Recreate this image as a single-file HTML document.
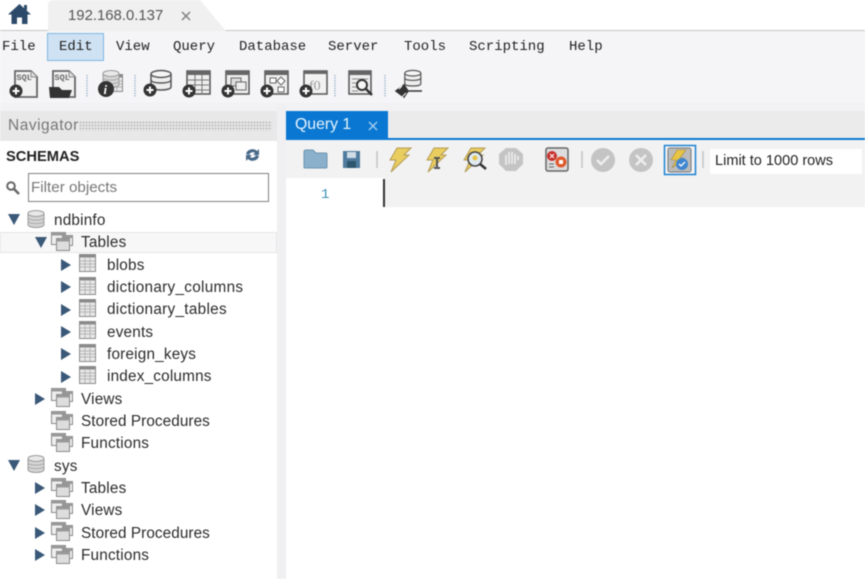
<!DOCTYPE html>
<html><head><meta charset="utf-8">
<style>
html,body{margin:0;padding:0;width:865px;height:579px;overflow:hidden;background:#fff}
#r{position:absolute;left:0;top:0;width:865px;height:579px;overflow:hidden;font-family:"Liberation Sans",sans-serif;color:#222;filter:blur(.5px)}
.a{position:absolute}
.m{position:absolute;top:39px;font:14px/16px "Liberation Mono",monospace;color:#222;white-space:pre}
.t{position:absolute;margin-top:1px;font:15.3px/18px "Liberation Sans",sans-serif;letter-spacing:.2px;color:#2b2b2b;white-space:pre}
svg{position:absolute;overflow:visible}
</style></head><body><div id="r">
<svg width="0" height="0">
<defs>
<g id="plus"><circle cx="0" cy="0" r="6.5" fill="#333"/><path d="M-3.5 0H3.5M0-3.5V3.5" stroke="#fff" stroke-width="2"/></g>
<g id="doc"><path d="M1 1H17L23 7V27H1Z" fill="#f2f2f2" stroke="#666" stroke-width="1.8"/><path d="M17 1V7H23" fill="#ddd" stroke="#888"/><text x="2.5" y="10" font-family="Liberation Mono" font-size="8.5" font-weight="bold" fill="#666">SQL</text></g>
<g id="db"><path d="M1 4V17C1 21 21 21 21 17V4" fill="#eee" stroke="#555" stroke-width="1.5"/><ellipse cx="11" cy="4" rx="10" ry="3.5" fill="#f5f5f5" stroke="#555" stroke-width="1.5"/><path d="M1 10C1 14 21 14 21 10" fill="none" stroke="#555" stroke-width="1.4"/></g>
<g id="sdb"><path d="M1 3.5V14.5C1 18.5 17 18.500 17 14.500V3.500" fill="#d5d5d5" stroke="#9a9a9a"/><ellipse cx="9" cy="3.500" rx="8" ry="3" fill="#e8e8e8" stroke="#9a9a9a"/><path d="M1 7.500C1 11 17 11 17 7.500M1 11C1 14.500 17 14.500 17 11" fill="none" stroke="#aaa"/></g>
<g id="tbl"><rect x=".5" y=".5" width="16" height="17" fill="#e8e8e8" stroke="#8c8c8c"/><rect x=".5" y=".5" width="16" height="3" fill="#8a8a8a"/><path d="M1 7H16M1 10H16M1 13H16M6 4V17M11 4V17" stroke="#b5b5b5"/></g>
<g id="grp"><rect x=".5" y=".5" width="14" height="12" fill="#eee" stroke="#8a8a8a"/><rect x=".5" y=".5" width="14" height="3" fill="#999"/><rect x="11.500" y="3.500" width="10" height="10" fill="#eee" stroke="#8a8a8a"/><rect x="11.500" y="3.500" width="10" height="2.500" fill="#999"/><rect x="5.500" y="6.500" width="13" height="12" fill="#ddd" stroke="#8a8a8a"/><rect x="5.500" y="6.500" width="13" height="3" fill="#999"/></g>
<path id="ar" d="M0 0L10 6L0 12Z" fill="#3a5878"/>
<path id="ad" d="M0 0H12L6 11Z" fill="#3a5878"/>
<g id="bolt"><path d="M9 0H23L16 7H21L3 24L8 12H2Z" fill="#e9cd5f" stroke="#b49c55"/></g>
</defs></svg>

<!-- top bars -->
<div class="a" style="left:0;top:30px;width:865px;height:1px;background:#c6c6c6"></div>
<div class="a" style="left:0;top:31px;width:865px;height:72px;background:#f5f5f7"></div>
<svg style="left:0;top:0" width="865" height="32"><path d="M48 31V6Q48 0 54 0H200L226 31Z" fill="#f0f0f0"/></svg>
<svg style="left:7px;top:3px" width="25" height="22"><path d="M12.500 1L24 11.500H20.500V21H15V14.500H10V21H4.500V11.500H1Z" fill="#2d4a6a"/><rect x="17" y="2" width="3" height="5" fill="#2d4a6a"/></svg>
<div class="a" style="left:68px;top:7px;font-size:14.900px;line-height:18px;color:#555">192.168.0.137</div>
<svg style="left:181px;top:11px" width="10" height="10"><path d="M1 1L9 9M9 1L1 9" stroke="#808080" stroke-width="1.500"/></svg>

<!-- menu -->
<div class="a" style="left:47px;top:33px;width:57px;height:28px;background:#cfe2f3;border:1px solid #7fb6e2;box-sizing:border-box"></div>
<div class="m" style="left:2px">File</div>
<div class="m" style="left:59px">Edit</div>
<div class="m" style="left:116px">View</div>
<div class="m" style="left:173px">Query</div>
<div class="m" style="left:239px">Database</div>
<div class="m" style="left:328px">Server</div>
<div class="m" style="left:404px">Tools</div>
<div class="m" style="left:469px">Scripting</div>
<div class="m" style="left:569px">Help</div>

<!-- main toolbar -->
<svg style="left:0;top:0" width="430" height="104">
<use href="#doc" x="14" y="70"/><use href="#plus" x="16" y="91"/>
<use href="#doc" x="52" y="70"/><path d="M49 87H59L62 90H72L69 98H50Z" fill="#333"/>
<path d="M87 75V97M135 75V97M335 75V97M385 75V97" stroke="#a9bdd4" stroke-width="1.500" stroke-dasharray="1.500 1"/>
<use href="#tbl" x="106" y="74"/><use href="#sdb" x="102" y="70"/><circle cx="106" cy="89" r="8" fill="#333"/><text x="103.500" y="94" font-family="Liberation Serif" font-size="13" font-style="italic" font-weight="bold" fill="#fff">i</text>
<use href="#db" x="150" y="70"/><use href="#plus" x="150" y="90"/>
<rect x="187" y="71" width="23" height="23" fill="#eee" stroke="#555" stroke-width="1.500"/><rect x="187" y="71" width="23" height="4" fill="#666"/><path d="M188 80H209M188 85H209M188 90H209M195 75V94M202 75V94" stroke="#777"/><use href="#plus" x="189" y="91"/>
<rect x="226" y="71" width="23" height="23" fill="#eee" stroke="#555" stroke-width="1.500"/><rect x="226" y="71" width="23" height="4" fill="#666"/><rect x="231" y="78" width="10" height="8" fill="#ddd" stroke="#666"/><rect x="236" y="82" width="10" height="8" fill="#eee" stroke="#666"/><use href="#plus" x="228" y="91"/>
<rect x="265" y="71" width="23" height="23" fill="#eee" stroke="#555" stroke-width="1.500"/><rect x="265" y="71" width="23" height="4" fill="#666"/><rect x="270" y="78" width="6" height="5" fill="#fff" stroke="#666"/><path d="M281 77L285 81L281 85L277 81Z" fill="#fff" stroke="#666"/><rect x="278" y="87" width="6" height="5" fill="#fff" stroke="#666"/><use href="#plus" x="267" y="91"/>
<rect x="304" y="71" width="23" height="23" fill="#f2f2f2" stroke="#555" stroke-width="1.500"/><rect x="304" y="71" width="23" height="3" fill="#666"/><text x="309" y="90" font-family="Liberation Serif" font-size="14" fill="#999">f0</text><use href="#plus" x="306" y="91"/>
<rect x="349" y="71" width="22" height="23" fill="#eee" stroke="#555" stroke-width="1.500"/><rect x="349" y="71" width="22" height="4" fill="#666"/><path d="M352 79H368M352 83H358M352 87H358M352 91H358" stroke="#888"/><circle cx="362" cy="85" r="5" fill="#f5f5f5" stroke="#333" stroke-width="2"/><path d="M366 89L372 95" stroke="#333" stroke-width="2.500"/>
<g transform="translate(404,70) scale(.8)"><use href="#db"/></g>
<path d="M396 91L404 85L408 91L404 97ZM404 91H422" fill="#333" stroke="#333" stroke-width="1.500"/><path d="M399 89L402 86M402 97L406 93" stroke="#fff"/>
</svg>

<!-- navigator -->
<div class="a" style="left:0;top:103px;width:865px;height:8px;background:#f2f2f4"></div>
<div class="a" style="left:0;top:111px;width:277px;height:30px;background:#e8e8e8"></div>
<div class="a" style="left:8px;top:117px;font-size:15.500px;letter-spacing:.5px;line-height:18px;color:#777">Navigator</div>
<div class="a" style="left:79px;top:121px;width:193px;height:10px;background-image:radial-gradient(#bbb 45%,transparent 50%);background-size:3px 3px"></div>
<div class="a" style="left:277px;top:103px;width:9px;height:476px;background:#f0f0f2"></div>
<div class="a" style="left:6px;top:148px;font-size:14.700px;line-height:18px;font-weight:bold;color:#222">SCHEMAS</div>
<svg style="left:244px;top:148px" width="18" height="14"><path d="M2 6A6.500 6 0 0 1 13 3L15 1V7H9L11 5A4 4 0 0 0 5 7ZM15 8A6.500 6 0 0 1 4 11L2 13V7H8L6 9A4 4 0 0 0 12 7Z" fill="#4a6a8a"/></svg>
<svg style="left:5px;top:180px" width="16" height="16"><circle cx="6" cy="6" r="3.800" fill="none" stroke="#666" stroke-width="2"/><path d="M9 9L14 14" stroke="#666" stroke-width="2.500"/></svg>
<div class="a" style="left:28px;top:173px;width:241px;height:29px;border:1px solid #808080;box-sizing:border-box;background:#fff"></div>
<div class="a" style="left:31px;top:179px;font-size:15.200px;line-height:18px;color:#777">Filter objects</div>

<div class="a" style="left:0;top:232px;width:277px;height:21px;background:#f7f7f7;border:1px solid #e6e6e6;box-sizing:border-box"></div>

<svg style="left:0;top:0" width="277" height="579">
<use href="#ad" x="8" y="214"/><use href="#sdb" x="27" y="210"/>
<use href="#ad" x="35" y="237"/><use href="#grp" x="51" y="232"/>
<use href="#ar" x="61" y="259"/><use href="#tbl" x="79" y="254"/>
<use href="#ar" x="61" y="281"/><use href="#tbl" x="79" y="277"/>
<use href="#ar" x="61" y="304"/><use href="#tbl" x="79" y="299"/>
<use href="#ar" x="61" y="326"/><use href="#tbl" x="79" y="321"/>
<use href="#ar" x="61" y="348"/><use href="#tbl" x="79" y="344"/>
<use href="#ar" x="61" y="371"/><use href="#tbl" x="79" y="366"/>
<use href="#ar" x="35" y="393"/><use href="#grp" x="51" y="388"/>
<use href="#grp" x="51" y="411"/>
<use href="#grp" x="51" y="433"/>
<use href="#ad" x="8" y="460"/><use href="#sdb" x="27" y="455"/>
<use href="#ar" x="35" y="482"/><use href="#grp" x="51" y="478"/>
<use href="#ar" x="35" y="504"/><use href="#grp" x="51" y="500"/>
<use href="#ar" x="35" y="527"/><use href="#grp" x="51" y="522"/>
<use href="#ar" x="35" y="549"/><use href="#grp" x="51" y="545"/>
</svg>

<div class="t" style="left:54px;top:211px">ndbinfo</div>
<div class="t" style="left:81px;top:233px">Tables</div>
<div class="t" style="left:107px;top:256px">blobs</div>
<div class="t" style="left:107px;top:278px;letter-spacing:.3px">dictionary_columns</div>
<div class="t" style="left:107px;top:300px;letter-spacing:.3px">dictionary_tables</div>
<div class="t" style="left:107px;top:323px">events</div>
<div class="t" style="left:107px;top:345px">foreign_keys</div>
<div class="t" style="left:107px;top:367px">index_columns</div>
<div class="t" style="left:81px;top:390px">Views</div>
<div class="t" style="left:81px;top:412px;letter-spacing:.08px">Stored Procedures</div>
<div class="t" style="left:81px;top:434px">Functions</div>
<div class="t" style="left:54px;top:457px">sys</div>
<div class="t" style="left:81px;top:479px">Tables</div>
<div class="t" style="left:81px;top:501px">Views</div>
<div class="t" style="left:81px;top:524px;letter-spacing:.08px">Stored Procedures</div>
<div class="t" style="left:81px;top:546px">Functions</div>

<!-- query tab -->
<div class="a" style="left:286px;top:111px;width:579px;height:27px;background:#ebebeb"></div>
<div class="a" style="left:286px;top:111px;width:102px;height:28px;background:#0a78d2"></div>
<div class="a" style="left:286px;top:138px;width:579px;height:2px;background:#0a78d2"></div>
<div class="a" style="left:295px;top:116px;font-size:15.800px;line-height:18px;color:#e8f2fb">Query 1</div>
<svg style="left:368px;top:121px" width="10" height="10"><path d="M1 1L9 9M9 1L1 9" stroke="#a9d0f0" stroke-width="1.300"/></svg>
<div class="a" style="left:286px;top:140px;width:579px;height:38px;background:#f2f2f2"></div>

<!-- query toolbar -->
<svg style="left:0;top:0" width="865" height="180">
<path d="M304 152Q304 150 306 150H313L316 153H326Q327 153 327 155V167Q327 168 326 168H305Q304 168 304 167Z" fill="#8ab0cc" stroke="#6d93af"/>
<path d="M343 151H360V168H343Z" fill="#4f7b9f"/><rect x="347" y="152" width="9" height="6" fill="#cfdce6"/><rect x="347" y="161" width="9" height="7" fill="#2f566f"/>
<path d="M377 151V168M582 151V168M703 151V168" stroke="#c4c4c4" stroke-width="1.500"/>
<use href="#bolt" x="388" y="148"/>
<use href="#bolt" x="425" y="148"/><path d="M434 158H440M437 158V167M434 168H440" stroke="#555" stroke-width="2"/>
<use href="#bolt" x="462" y="148"/><circle cx="475" cy="159" r="7" fill="#dfe9f0" stroke="#444" stroke-width="1.600"/><path d="M480 164L486 169" stroke="#333" stroke-width="2.500"/><circle cx="475" cy="158" r="2.500" fill="#e8c445"/>
<path d="M506 148H516L523 154V164L516 171H506L499 164V154Z" fill="#c4c4c4"/><path d="M506 165V155M509 164V152M512 164V152M515 164V154M518 160V156" stroke="#f2f2f2" stroke-width="1.500"/>
<rect x="546" y="148" width="22" height="23" rx="2" fill="#ddd" stroke="#666" stroke-width="1.500"/><circle cx="552" cy="156" r="5" fill="#c8302a"/><circle cx="561" cy="162" r="5.500" fill="#e0582a"/><path d="M550 154L554 158M554 154L550 158" stroke="#fff"/><rect x="559" y="160" width="4" height="4" fill="#fff"/><path d="M549 164H554M549 167H554" stroke="#666"/>
<circle cx="603" cy="160" r="12" fill="#c4c4c4"/><path d="M597 160L601 164L609 156" fill="none" stroke="#eee" stroke-width="2.500"/>
<circle cx="641" cy="160" r="12" fill="#c4c4c4"/><path d="M636 155L646 165M646 155L636 165" stroke="#eee" stroke-width="2.500"/>
<rect x="664.500" y="145.500" width="31" height="29" fill="#f2f2f2" stroke="#1d83d4" stroke-width="1.500"/>
<rect x="668" y="148" width="23" height="24" rx="2" fill="#bbb" stroke="#777"/><path d="M677 150H686L680 158H684L672 168L676 160H671Z" fill="#e8c445" stroke="#a48a3a" stroke-width=".6"/><circle cx="682" cy="164" r="6" fill="#3f86d0"/><path d="M679 164L681 166L685 162" stroke="#fff" fill="none" stroke-width="1.300"/>
</svg>
<div class="a" style="left:710px;top:149px;width:152px;height:25px;background:#fff"></div>
<div class="a" style="left:715px;top:152px;font-size:14.550px;line-height:18px;color:#222">Limit to 1000 rows</div>

<!-- editor -->
<div class="a" style="left:385px;top:178px;width:480px;height:29px;background:#f2f2f2"></div>
<div class="a" style="left:383px;top:179px;width:2px;height:28px;background:#333"></div>
<div class="a" style="left:321px;top:186px;font:14px/18px 'Liberation Mono',monospace;color:#3f8fb5">1</div>
</div></body></html>
